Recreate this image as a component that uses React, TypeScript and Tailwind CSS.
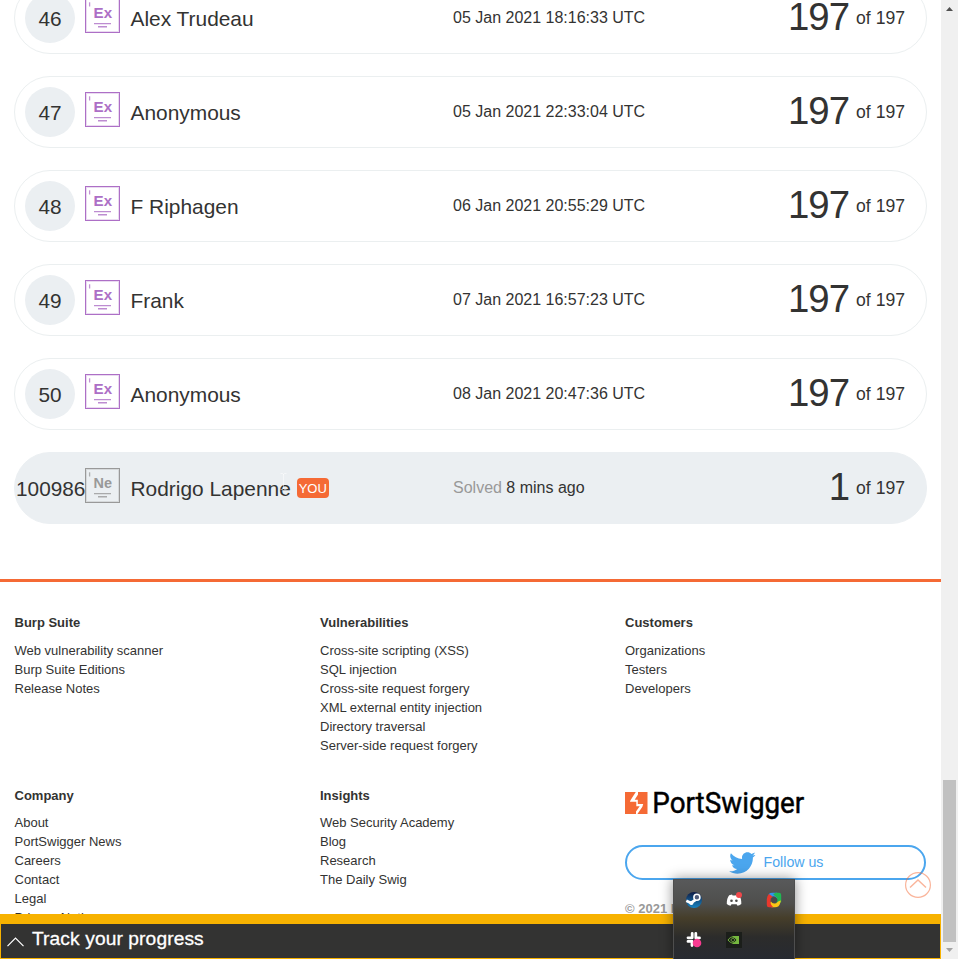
import React from "react";

const solvers = [
  { rank: 46, name: "Alex Trudeau", date: "05 Jan 2021 18:16:33 UTC" },
  { rank: 47, name: "Anonymous", date: "05 Jan 2021 22:33:04 UTC" },
  { rank: 48, name: "F Riphagen", date: "06 Jan 2021 20:55:29 UTC" },
  { rank: 49, name: "Frank", date: "07 Jan 2021 16:57:23 UTC" },
  { rank: 50, name: "Anonymous", date: "08 Jan 2021 20:47:36 UTC" },
];

function LevelBadge({ label, color }: { label: string; color: string }) {
  return (
    <svg width="35" height="35" viewBox="0 0 35 35" className="block shrink-0" style={{ color }}>
      <rect x="1.5" y="1.5" width="32" height="32" fill="none" stroke="currentColor" strokeOpacity="0.25" />
      <rect x="0.5" y="0.5" width="34" height="34" fill="none" stroke="currentColor" />
      <path d="M4.6 4.3v4.2" stroke="currentColor" strokeWidth="1.3" strokeOpacity="0.75" />
      <text x="17.8" y="20" textAnchor="middle" fontSize="15.5" fontWeight="700" fill="currentColor" fontFamily="'Liberation Sans', Arial, sans-serif" textLength="18.5" lengthAdjust="spacingAndGlyphs">
        {label}
      </text>
      <path d="M9 25.6h17M13 28.8h9" stroke="currentColor" strokeWidth="1.4" strokeOpacity="0.8" />
    </svg>
  );
}

function Score({ value }: { value: string }) {
  return (
    <div className="ml-auto mr-[21px] flex items-center whitespace-nowrap">
      <span className="pb-[2px] text-[38.4px] leading-[44px] tracking-[-1px]">{value}</span>
      <span className="ml-[7px] text-[17.6px]">of 197</span>
    </div>
  );
}

function LinkColumn({ title, links, tight = false }: { title: string; links: string[]; tight?: boolean }) {
  return (
    <div>
      <h3 className="font-bold leading-[19px]">{title}</h3>
      <ul className={tight ? "mt-[8px] leading-[19px]" : "mt-[9px] leading-[19px]"}>
        {links.map((l) => (
          <li key={l}>{l}</li>
        ))}
      </ul>
    </div>
  );
}

function Logo() {
  return (
    <svg width="190" height="36" viewBox="0 0 190 36" className="block overflow-visible" role="img">
      <rect x="0" y="2" width="22.5" height="22" fill="#f56a35" />
      <path d="M10.8 2 5.5 10.2l-.6 1.6h6.4v4.4h3.4L11 21.5V24h1.4l5-7.2.8-2.9h-5.4V9.7H9.7L13 4.4V2z" fill="#fff" />
      <text x="27.3" y="23.3" fontSize="29" fontWeight="400" fill="#000" stroke="#000" strokeWidth=".45" fontFamily="Roboto, sans-serif" textLength="152" lengthAdjust="spacingAndGlyphs">
        PortSwigger
      </text>
    </svg>
  );
}

function Tray() {
  return (
    <div className="absolute left-[673px] top-[879px] grid h-[80px] w-[122px] grid-cols-3 grid-rows-[40px_40px] place-items-center border border-b-0 border-[#4e4e4e] bg-[linear-gradient(#58595a_0%,#4e4e4c_30%,#463e2a_48%,#2c2c2b_72%,#272a31_100%)] shadow-[0_0_12px_rgba(0,0,0,0.45)]">
      <svg width="18" height="18" viewBox="0 0 18 18">
        <defs>
          <linearGradient id="steam" x1="0" y1="0" x2="0" y2="1">
            <stop offset="0" stopColor="#101c45" />
            <stop offset="1" stopColor="#1784c2" />
          </linearGradient>
        </defs>
        <circle cx="9" cy="9" r="8" fill="url(#steam)" />
        <path d="M1.3 9.8 6 12l4-2.8L12 7" stroke="#fff" strokeWidth="2.8" fill="none" />
        <circle cx="11.9" cy="6.3" r="3" fill="#4e5a78" stroke="#fff" strokeWidth="1.6" />
        <circle cx="6.4" cy="12" r="2.1" fill="#fff" />
      </svg>
      <svg width="18" height="18" viewBox="0 0 18 18">
        <path d="M4.2 4.2 7 3.5l.6 1h3l.6-1 2.8.7c1.7 2.4 2.5 5 2.3 8.8-1.3 1-2.6 1.6-3.8 1.8l-.9-1.5H6.5l-.9 1.5c-1.2-.2-2.5-.8-3.8-1.8-.2-3.8.7-6.4 2.4-8.8z" fill="#fff" />
        <circle cx="6.5" cy="9.7" r="1.3" fill="#4b4b48" />
        <circle cx="11.4" cy="9.7" r="1.3" fill="#4b4b48" />
        <circle cx="14" cy="4" r="3" fill="#f0474a" />
      </svg>
      <svg width="18" height="18" viewBox="0 0 18 18">
        <path d="M3.5 3.2Q5 1.8 7.5 1.8h4.5L14 7l-1.8 1A4 4 0 0 0 6 6z" fill="#3294ee" />
        <path d="M11 1.8h3q2.2 0 2.2 2.2v7l-3.4 3-1.7-2A4 4 0 0 0 10.5 5.5L8 3z" fill="#20b653" />
        <path d="M15.2 12q-.8 4.2-5.2 4.3H6.5L4 13l2-2.5a4 4 0 0 0 6.6.5l1.4-1 2-.5z" fill="#fbc516" />
        <path d="M4 3Q1.8 5 1.8 8v6q0 2.3 2.2 2.3h4.5A7 7 0 0 1 5.5 10 4.500 4.500 0 0 1 7.500 5.500z" fill="#e9382c" />
        <circle cx="9.2" cy="9" r="2.8" fill="#48494a" />
      </svg>
      <svg width="18" height="18" viewBox="0 0 18 18" fill="none">
        <path d="M7.200 2.500v4M3 6.800h4.200M10.800 2.500v4.500M11 6.900h3.500M7 10.500v4M3 10.400h3.800" stroke="#fff" strokeWidth="2.800" strokeLinecap="round" />
        <circle cx="12" cy="12" r="4.300" fill="#f83b91" />
      </svg>
      <svg width="16" height="16" viewBox="0 0 16 16">
        <rect width="16" height="16" fill="#1b1e1a" />
        <path d="M6.500 4H13v8H6.500z" fill="#76b83f" />
        <path d="M2 8c3-4.200 6.500-3.800 9 0-2.500 3.800-6 4-9 0z" fill="#1b1e1a" stroke="#76b83f" />
        <path d="M4.700 8c1.500-2.200 3-2 4.300 0-1.300 2-2.800 2.200-4.300 0z" fill="none" stroke="#76b83f" />
      </svg>
      <span />
    </div>
  );
}

export default function App() {
  return (
    <div className="relative flex h-[959px] w-[958px] overflow-hidden bg-white font-['Liberation_Sans',Arial,sans-serif] text-[#333332]">
      <main className="h-full w-[941px] shrink-0 overflow-hidden">
        <ul className="-mt-[18px] ml-[14px] flex w-[913px] flex-col gap-[22px]">
          {solvers.map((s) => (
            <li key={s.rank} className="flex h-[72px] items-center rounded-full border border-[#ebeff0] pl-[10px]">
              <span className="flex h-[50px] w-[50px] shrink-0 items-center justify-center rounded-full bg-[#ebeff2] pt-px text-[20.8px]">
                {s.rank}
              </span>
              <div className="ml-[10px] -mt-[5px]">
                <LevelBadge label="Ex" color="#ad6fc6" />
              </div>
              <span className="ml-[10.5px] w-[322.5px] pt-px text-[20.9px]">{s.name}</span>
              <span className="whitespace-nowrap pb-px text-[16px]">{s.date}</span>
              <Score value="197" />
            </li>
          ))}
          <li className="flex h-[72px] items-center rounded-full border border-[#ebeff2] bg-[#ebeff2] pl-px">
            <span className="w-[69px] shrink-0 pt-px text-[20.8px]">100986</span>
            <div className="-mt-[5px]">
              <LevelBadge label="Ne" color="#999" />
            </div>
            <div className="relative ml-[10.5px] flex w-[322.5px] items-center pt-px text-[20.9px]">
              Rodrigo Lapenne
              <span className="ml-[6px] mb-px flex h-[20px] w-[32px] items-center justify-center rounded-[4px] bg-[#f56a35] pt-px text-[13px] text-white">
                YOU
              </span>
              <svg width="7" height="17" viewBox="0 0 7 17" className="absolute left-[149px] top-[1px]" fill="none" stroke="#fff" strokeOpacity="0.5">
                <path d="M.5.5h2l1 1 1-1h2M3.5 1v15M.5 16.5h2l1-1 1 1h2" />
              </svg>
            </div>
            <span className="whitespace-nowrap pb-px text-[16px]">
              <span className="text-[#999]">Solved</span> 8 mins ago
            </span>
            <Score value="1" />
          </li>
        </ul>

        <footer className="mt-[55px] border-t-[3px] border-[#f56a35] pl-[14.5px] pt-[31px] text-[13px]">
          <div className="grid h-[173px] grid-cols-[305.5px_305px_301px]">
            <LinkColumn title="Burp Suite" links={["Web vulnerability scanner", "Burp Suite Editions", "Release Notes"]} />
            <LinkColumn
              title="Vulnerabilities"
              links={[
                "Cross-site scripting (XSS)",
                "SQL injection",
                "Cross-site request forgery",
                "XML external entity injection",
                "Directory traversal",
                "Server-side request forgery",
              ]}
            />
            <LinkColumn title="Customers" links={["Organizations", "Testers", "Developers"]} />
          </div>
          <div className="grid grid-cols-[305.5px_305px_301px]">
            <LinkColumn
              tight
              title="Company"
              links={["About", "PortSwigger News", "Careers", "Contact", "Legal", "Privacy Notice"]}
            />
            <LinkColumn tight title="Insights" links={["Web Security Academy", "Blog", "Research", "The Daily Swig"]} />
            <div className="pt-[4px]">
              <Logo />
              <div className="mt-[19px] flex h-[35px] items-center justify-center rounded-full border-2 border-[#4ba6ee] text-[14.2px] text-[#4ba6ee]">
                <svg width="28" height="28" viewBox="0 0 24 24" fill="currentColor" className="mr-[8px]">
                  <path d="M23.643 4.937c-.835.37-1.732.62-2.675.733.962-.576 1.7-1.49 2.048-2.578-.9.534-1.897.922-2.958 1.13-.85-.904-2.06-1.47-3.4-1.47-2.572 0-4.658 2.086-4.658 4.66 0 .364.042.718.12 1.06-3.873-.195-7.304-2.05-9.602-4.868-.4.69-.63 1.49-.63 2.342 0 1.616.823 3.043 2.072 3.878-.764-.025-1.482-.234-2.11-.583v.06c0 2.257 1.605 4.14 3.737 4.568-.392.106-.803.162-1.227.162-.3 0-.593-.028-.877-.082.593 1.85 2.313 3.198 4.352 3.234-1.595 1.25-3.604 1.995-5.786 1.995-.376 0-.747-.022-1.112-.065 2.062 1.323 4.51 2.093 7.14 2.093 8.57 0 13.255-7.098 13.255-13.254 0-.2-.005-.402-.014-.602.91-.658 1.7-1.477 2.323-2.41z" />
                </svg>
                Follow us
              </div>
              <p className="mt-[19px] font-bold leading-[19px] text-[#999]">© 2021 PortSwigger Ltd.</p>
            </div>
          </div>
        </footer>
      </main>

      <aside className="flex h-full w-[17px] flex-col items-center bg-[#f0f0f0]">
        <svg width="7" height="4" viewBox="0 0 7 4" className="mt-[7px]">
          <path d="M3.5 0 7 4H0z" fill="#505050" />
        </svg>
        <div className="mt-[769px] -ml-px h-[162px] w-[13px] bg-[#c1c1c1]" />
        <svg width="7" height="4" viewBox="0 0 7 4" className="mt-[6px]">
          <path d="M0 0h7L3.5 4z" fill="#a3a3a3" />
        </svg>
      </aside>

      <svg width="26" height="26" viewBox="0 0 26 26" className="absolute left-[905px] top-[872px]" fill="none" stroke="#f56a35" strokeOpacity="0.5">
        <circle cx="13" cy="13" r="12.4" strokeWidth="1.2" />
        <path d="M5 15.5 13 8l8 7.5" strokeWidth="1.4" />
      </svg>

      <div className="absolute left-0 top-[914px] flex h-[45px] w-[941px] items-center border border-t-[10px] border-[#f7b200] bg-[#333332] pl-[6px] text-white">
        <svg width="17" height="10" viewBox="0 0 17 10" fill="none" stroke="#fff" className="mt-[2px]">
          <path d="M.5 9.2 8.5 1l8 8.2" strokeWidth="1.2" />
        </svg>
        <span className="ml-[8px] mb-[4px] text-[19.2px] tracking-[0.1px] [-webkit-text-stroke:0.3px_white]">Track your progress</span>
      </div>
      <Tray />
    </div>
  );
}
